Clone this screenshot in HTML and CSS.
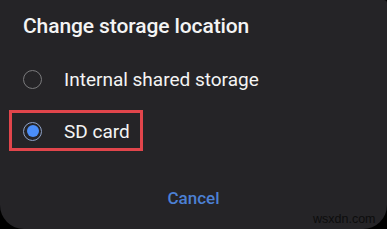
FILE: index.html
```html
<!DOCTYPE html>
<html>
<head>
<meta charset="utf-8">
<link rel="stylesheet" href="styles.css">
</head>
<body>
<div class="dialog">
  <div class="title">Change storage location</div>
  <div class="options">
    <div class="option">
      <span class="radio"></span>
      <span class="label">Internal shared storage</span>
    </div>
    <div class="option">
      <span class="radio checked"></span>
      <span class="label">SD card</span>
    </div>
  </div>
  <div class="actions">
    <span class="cancel">Cancel</span>
  </div>
  <div class="highlight"></div>
  <div class="watermark">wsxdn.com</div>
</div>
</body>
</html>
```
FILE: styles.css
```css
html, body {
  margin: 0;
  padding: 0;
  background: #000;
}
.dialog {
  position: relative;
  width: 387px;
  height: 229px;
  box-sizing: border-box;
  background: #252427;
  border-radius: 0 3px 24px 24px;
  font-family: Roboto, "Noto Sans", sans-serif;
  color: #f4f4f4;
  padding-top: 14px;
  display: flex;
  flex-direction: column;
  overflow: hidden;
}
.title {
  padding-left: 23px;
  font-size: 21px;
  font-weight: 500;
  line-height: 24px;
  letter-spacing: -0.1px;
}
.options {
  margin-top: 15px;
  display: flex;
  flex-direction: column;
}
.option {
  height: 52px;
  display: flex;
  align-items: center;
  padding-left: 23px;
}
.radio {
  width: 19px;
  height: 19px;
  box-sizing: border-box;
  border-radius: 50%;
  border: 1px solid #7a7a7c;
  display: flex;
  align-items: center;
  justify-content: center;
}
.radio.checked {
  border-color: #8ea2c8;
}
.radio.checked::after {
  content: "";
  width: 12px;
  height: 12px;
  border-radius: 50%;
  background: #4b8ef9;
}
.label {
  margin-left: 22px;
  font-size: 19px;
  line-height: 24px;
  position: relative;
  top: 1px;
}
.actions {
  margin-top: 29px;
  display: flex;
  justify-content: center;
}
.cancel {
  color: #4c80d4;
  font-size: 17px;
  font-weight: 500;
  line-height: 24px;
}
.highlight {
  position: absolute;
  left: 9px;
  top: 110px;
  width: 134px;
  height: 41px;
  box-sizing: border-box;
  border: 3px solid #e1454b;
}
.watermark {
  position: absolute;
  left: 313px;
  top: 212px;
  font-family: "Liberation Sans", Arial, sans-serif;
  font-size: 12.5px;
  line-height: 14px;
  color: #0d0d0d;
}
```
